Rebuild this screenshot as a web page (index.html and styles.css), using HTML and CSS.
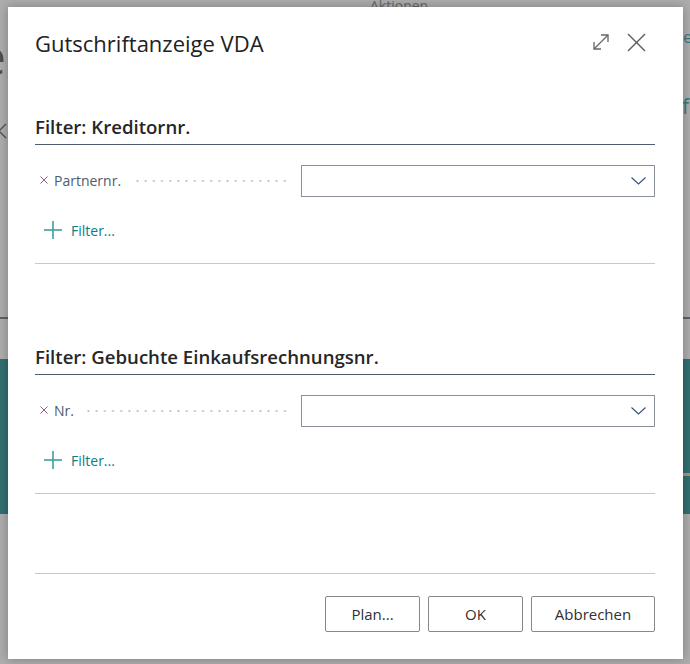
FILE: index.html
```html
<!DOCTYPE html>
<html lang="de">
<head>
<meta charset="utf-8">
<title>Gutschriftanzeige VDA</title>
<link rel="stylesheet" href="styles.css">
</head>
<body>
  <div class="bg-frag bg-actions">Aktionen</div>
  <div class="bg-frag bg-title-e">e</div>
  <svg class="bg-frag bg-back" width="10" height="16" viewBox="0 0 10 16"><polyline points="8,1 1,8 8,15" fill="none" stroke="#555" stroke-width="1.4"/></svg>
  <div class="bg-frag bg-right-e">e</div>
  <div class="bg-frag bg-right-f">f</div>
  <div class="bg-frag bg-tan"></div>

  <div class="dialog">
    <div class="dlg-header">
      <h1 class="dlg-title">Gutschriftanzeige VDA</h1>
      <div class="dlg-tools">
        <svg class="tool" width="18" height="18" viewBox="0 0 18 18"><g fill="none" stroke="#666" stroke-width="1.3"><line x1="2" y1="16" x2="16" y2="2"/><polyline points="9,2 16,2 16,9"/><polyline points="2,9 2,16 9,16"/></g></svg>
        <svg class="tool" width="19" height="19" viewBox="0 0 19 19"><g fill="none" stroke="#5f5f5f" stroke-width="1.5"><line x1="1" y1="1" x2="18" y2="18"/><line x1="18" y1="1" x2="1" y2="18"/></g></svg>
      </div>
    </div>

    <section class="filter-section first">
      <h2 class="section-head">Filter: Kreditornr.</h2>
      <div class="filter-row">
        <div class="label-col">
          <svg class="remove" width="8" height="8" viewBox="0 0 8 8"><g stroke="#8d5f86" stroke-width="1"><line x1="0.5" y1="0.5" x2="7.5" y2="7.5"/><line x1="7.5" y1="0.5" x2="0.5" y2="7.5"/></g></svg>
          <span class="label">Partnernr.</span>
          <span class="leader"></span>
        </div>
        <div class="select">
          <svg width="15" height="8" viewBox="0 0 15 8"><polyline points="0.5,0.5 7.5,7 14.5,0.5" fill="none" stroke="#34507a" stroke-width="1.1"/></svg>
        </div>
      </div>
      <div class="add-filter">
        <svg width="18" height="18" viewBox="0 0 18 18"><g stroke="#3a9fa0" stroke-width="1.6"><line x1="9" y1="0" x2="9" y2="18"/><line x1="0" y1="9" x2="18" y2="9"/></g></svg>
        <span>Filter...</span>
      </div>
      <div class="sep"></div>
    </section>

    <section class="filter-section second">
      <h2 class="section-head">Filter: Gebuchte Einkaufsrechnungsnr.</h2>
      <div class="filter-row">
        <div class="label-col">
          <svg class="remove" width="8" height="8" viewBox="0 0 8 8"><g stroke="#8d5f86" stroke-width="1"><line x1="0.5" y1="0.5" x2="7.5" y2="7.5"/><line x1="7.5" y1="0.5" x2="0.5" y2="7.5"/></g></svg>
          <span class="label">Nr.</span>
          <span class="leader"></span>
        </div>
        <div class="select">
          <svg width="15" height="8" viewBox="0 0 15 8"><polyline points="0.5,0.5 7.5,7 14.5,0.5" fill="none" stroke="#34507a" stroke-width="1.1"/></svg>
        </div>
      </div>
      <div class="add-filter">
        <svg width="18" height="18" viewBox="0 0 18 18"><g stroke="#3a9fa0" stroke-width="1.6"><line x1="9" y1="0" x2="9" y2="18"/><line x1="0" y1="9" x2="18" y2="9"/></g></svg>
        <span>Filter...</span>
      </div>
      <div class="sep"></div>
    </section>

    <div class="footer">
      <div class="sep"></div>
      <div class="buttons">
        <button class="btn btn-plan">Plan...</button>
        <button class="btn btn-ok">OK</button>
        <button class="btn btn-cancel">Abbrechen</button>
      </div>
    </div>
  </div>
</body>
</html>
```

FILE: styles.css
```css
html, body {
  margin: 0;
  padding: 0;
}

body {
  position: relative;
  width: 690px;
  height: 664px;
  overflow: hidden;
  font-family: "Open Sans", "Noto Sans", sans-serif;
  background: linear-gradient(to bottom,
    #adadad 0, #adadad 317px,
    #5b6169 317px, #5b6169 319px,
    #adadad 319px, #adadad 359px,
    #326f72 359px, #326f72 514px,
    #adadad 514px, #adadad 664px);
}

.bg-frag {
  position: absolute;
  z-index: 0;
}

.bg-actions {
  left: 370px;
  top: -1px;
  font-size: 14px;
  line-height: 14px;
  color: #666;
}

.bg-title-e {
  left: -22px;
  top: 26px;
  font-size: 50px;
  line-height: 60px;
  color: #4f4f4f;
}

.bg-back {
  left: -2px;
  top: 123px;
}

.bg-right-e {
  left: 683px;
  top: 25px;
  font-size: 17px;
  line-height: 24px;
  color: #357a80;
}

.bg-right-f {
  left: 682px;
  top: 92px;
  font-size: 21px;
  line-height: 28px;
  color: #357a80;
}

.bg-tan {
  left: 683px;
  top: 473px;
  width: 7px;
  height: 3px;
  background: #a6967a;
}

.dialog {
  position: relative;
  z-index: 1;
  box-sizing: border-box;
  margin: 7px 0 0 8px;
  width: 675px;
  height: 652px;
  padding: 22px 28px 0 27px;
  background: #fff;
  box-shadow: 0 0 10px rgba(0, 0, 0, 0.28);
  display: flex;
  flex-direction: column;
}

.dlg-header {
  display: flex;
  align-items: center;
  justify-content: space-between;
  height: 28px;
}

.dlg-title {
  margin: 0;
  font-size: 22px;
  line-height: 28px;
  font-weight: 400;
  color: #212121;
}

.dlg-tools {
  display: flex;
  align-items: center;
  gap: 17px;
  margin-right: 9px;
  margin-top: -2px;
}

.tool {
  display: block;
}

.filter-section.first {
  margin-top: 58px;
}

.filter-section.second {
  margin-top: 81px;
}

.section-head {
  margin: 0;
  font-size: 18.6px;
  line-height: 24px;
  font-weight: 600;
  color: #262626;
  padding-bottom: 5px;
  border-bottom: 1px solid #505c6d;
}

.filter-row {
  display: flex;
  align-items: center;
  margin-top: 20px;
  height: 32px;
}

.label-col {
  display: flex;
  align-items: center;
  width: 266px;
  flex: none;
  padding-left: 5px;
  box-sizing: border-box;
}

.remove {
  display: block;
  flex: none;
  margin-right: 6px;
  margin-top: -2px;
}

.label {
  font-size: 14px;
  line-height: 20px;
  color: #505c6d;
}

.leader {
  flex: 1;
  height: 4px;
  margin: 0 12px 0 12px;
  background-image: radial-gradient(circle, #c4c4c4 0.9px, transparent 1.2px);
  background-size: 8.2px 4px;
  background-repeat: repeat-x;
  background-position: right center;
}

.select {
  flex: 1;
  box-sizing: border-box;
  height: 32px;
  border: 1px solid #8a919c;
  display: flex;
  align-items: center;
  justify-content: flex-end;
  padding-right: 8px;
}

.select svg {
  display: block;
}

.add-filter {
  display: flex;
  align-items: center;
  margin-top: 21px;
  height: 24px;
  padding-left: 9px;
  gap: 9px;
  font-size: 14px;
  color: #0e7c82;
}

.add-filter svg {
  display: block;
}

.sep {
  height: 1px;
  background: #c8c8c8;
}

.filter-section .sep {
  margin-top: 21px;
}

.footer {
  margin-top: 79px;
}

.buttons {
  display: flex;
  justify-content: flex-end;
  gap: 8px;
  margin-top: 22px;
}

.btn {
  box-sizing: border-box;
  height: 36px;
  border: 1px solid #8a8886;
  border-radius: 2px;
  background: #fff;
  font-family: "Open Sans", "Noto Sans", sans-serif;
  font-size: 15px;
  color: #323130;
  padding: 0;
}

.btn-plan {
  width: 95px;
}

.btn-ok {
  width: 95px;
}

.btn-cancel {
  width: 124px;
}
```
